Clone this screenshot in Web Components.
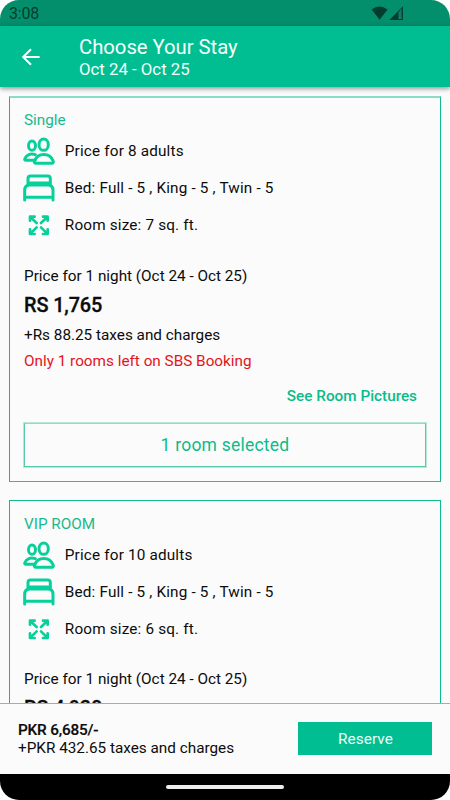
<!DOCTYPE html>
<html lang="en">
<head>
<meta charset="utf-8">
<title>Choose Your Stay</title>
<style>
html, body { margin: 0; height: 100%; background: #fff; }
body { font-family: Roboto, "Liberation Sans", sans-serif; overflow: hidden; }
</style>
</head>
<body>
<booking-screen>
  <status-bar slot="top" time="3:08"></status-bar>
  <app-header slot="top"><span>Choose Your Stay</span><span slot="dates">Oct 24 - Oct 25</span></app-header>
  <room-card class="soft" name="Single" guests="Price for 8 adults" beds="Bed: Full - 5 , King - 5 , Twin - 5" size="Room size: 7 sq. ft." stay="Price for 1 night (Oct 24 - Oct 25)" price="RS 1,765" taxes="+Rs 88.25 taxes and charges" left="Only 1 rooms left on SBS Booking"></room-card>
  <room-card name="VIP ROOM" guests="Price for 10 adults" beds="Bed: Full - 5 , King - 5 , Twin - 5" size="Room size: 6 sq. ft." stay="Price for 1 night (Oct 24 - Oct 25)" price="RS 4,920"></room-card>
  <booking-total slot="bottom"><span>PKR 6,685/-</span><span slot="taxes">+PKR 432.65 taxes and charges</span></booking-total>
  <nav-pill slot="bottom"></nav-pill>
</booking-screen>
<script>
class Base extends HTMLElement {
  connectedCallback() {
    if (!this.shadowRoot) this.attachShadow({ mode: 'open' }).innerHTML = this.render();
  }
  a(n) { return this.getAttribute(n) || ''; }
}

customElements.define('booking-screen', class extends Base {
  render() { return `<style>
    :host { display: flex; flex-direction: column; width: 450px; height: 800px; border-radius: 19px; overflow: hidden; background: #fbfbfb; color: #0c0c0c; font-size: 15.3px; }
    header { position: relative; z-index: 1; }
    main { flex: 1; min-height: 0; overflow: hidden; padding: 9px 9px 0; display: flex; flex-direction: column; gap: 18px; }
    footer { flex: none; }
    </style><header><slot name="top"></slot></header><main><slot></slot></main><footer><slot name="bottom"></slot></footer>`; }
});

customElements.define('status-bar', class extends Base {
  render() { return `<style>
    :host { display: flex; height: 26px; box-sizing: border-box; padding: 0 46px 0 9px; align-items: center; justify-content: space-between; background: #048f6c; color: #033d2f; font-size: 16px; line-height: 26px; letter-spacing: -.2px; }
    span { padding-top: 2px; }
    svg { display: block; }
    </style><span>${this.a('time')}</span>
    <svg width="33" height="16" viewBox="0 0 33 16"><path fill="#033d2f" d="M.6 4.6Q8.500-1.600 16.600 4.600L8.600 14.700Z"/><path fill="#033d2f" d="M32 1.300V15H18.300Z"/><path stroke="#048f6c" stroke-width="1.400" fill="none" d="M28.200 6.500V13.300H30.600"/><path fill="#15775d" d="M28.900 5V13.500H30.700V3.600Z"/></svg>`; }
});

customElements.define('app-header', class extends Base {
  render() { return `<style>
    :host { display: flex; height: 61px; align-items: center; background: #00be91; color: #f4fffb; box-shadow: 0 2px 4px rgba(0,0,0,.28), 0 1px 6px rgba(0,0,0,.16); }
    svg { margin-left: 20px; width: 22px; flex: none; }
    .t { margin-left: 37px; padding-top: 1px; }
    .a { font-size: 20.3px; line-height: 23px; letter-spacing: -.03px; }
    .b { font-size: 16.8px; line-height: 20px; }
    </style><svg width="22" height="22" viewBox="0 0 22 22" fill="none" stroke="#fff" stroke-width="2"><path d="M19.600 11H3.600M11 3.200 3.200 11l7.800 7.800"/></svg>
    <div class="t"><div class="a"><slot></slot></div><div class="b"><slot name="dates"></slot></div></div>`; }
});

const ICONS = {
  people: '<svg viewBox="70 136 96 96"><g stroke-width="9"><ellipse cx="97" cy="168" rx="10.500" ry="14"/><ellipse cx="132" cy="165" rx="14" ry="17"/><path d="M106 212H79Q74 212 75.500 207C80 195 93 190 107 195"/><path d="M108 221H157Q163 220 160 213C150 188 115 188 105 213Q102 220 108 221Z"/></g></svg>',
  bed: '<svg viewBox="70 247 96 96"><g stroke-width="9"><path d="M85 286V267Q85 259 93 259H144Q152 259 152 267V286M86 280H151"/><path d="M75 331V303Q75 286 90 286H145Q160 286 160 303V331M75 323H160"/></g></svg>',
  expand: '<svg viewBox="70 358 96 96"><g stroke-width="8"><path d="M91 393V381H105M130 381H144V393M144 419V433H130M105 433H91V419M92 382 111 400M143 382 124 400M143 432 124 413M92 432 111 413"/></g></svg>'
};

customElements.define('room-feature', class extends Base {
  render() { return `<style>
    :host { display: flex; height: 37px; align-items: center; gap: 9.800px; margin-left: -1px; letter-spacing: .17px; }
    svg { display: block; width: 32px; height: 32px; fill: none; stroke: #08d09b; stroke-linecap: round; stroke-linejoin: round; }
    </style>${ICONS[this.a('icon')]}<span><slot></slot></span>`; }
});

customElements.define('outline-button', class extends Base {
  render() { return `<style>
    :host { display: flex; height: 44px; box-sizing: border-box; align-items: center; justify-content: center; border: 1px solid #55cbaa; border-top-color: #8edcc5; box-shadow: 0 0 0 1px #b5e8d9, 0 -1px 0 0 #8edcc5; color: #0cbb8c; font-size: 17.500px; letter-spacing: .22px; }
    </style><slot></slot>`; }
});

customElements.define('room-card', class extends Base {
  render() { return `<style>
    :host { display: block; flex: none; box-sizing: border-box; height: 382px; border: 1px solid #10ba8c; padding: 13px 14px 0; line-height: 20px; }
    :host(.soft) { height: 386px; border-top: 2px solid #8adcc6; border-bottom: 1px solid #2abf98; padding-top: 12px; }
    .name { color: #18b98d; }
    .features { padding: 2px 0 22px; }
    :host(.soft) .features { padding-bottom: 23px; }
    .price { font-size: 19.900px; line-height: 24px; font-weight: 500; -webkit-text-stroke: .3px; letter-spacing: -.12px; margin: 8px 0 7px; }
    .left { color: #e4141b; margin-top: 6px; }
    .pics { color: #0cbb8c; font-weight: 500; text-align: right; margin: 15px 9px 17px 0; }
    </style>
    <div class="name">${this.a('name')}</div>
    <div class="features">
      <room-feature icon="people">${this.a('guests')}</room-feature>
      <room-feature icon="bed">${this.a('beds')}</room-feature>
      <room-feature icon="expand">${this.a('size')}</room-feature>
    </div>
    <div>${this.a('stay')}</div>
    <div class="price">${this.a('price')}</div>
    ${this.a('taxes') && `<div>${this.a('taxes')}</div><div class="left">${this.a('left')}</div>
    <div class="pics">See Room Pictures</div><outline-button>1 room selected</outline-button>`}`; }
});

customElements.define('booking-total', class extends Base {
  render() { return `<style>
    :host { display: flex; height: 71px; box-sizing: border-box; border-top: 1px solid #aaa; background: #fbfbfb; align-items: center; justify-content: space-between; padding: 0 18px; }
    .sum { line-height: 17.500px; padding-top: 1px; }
    .b { font-weight: 500; -webkit-text-stroke: .2px; letter-spacing: -.17px; }
    button { width: 134px; height: 33px; border: 0; margin-bottom: 2px; padding: 2px 0 0 1px; background: #00be91; color: #eefff9; font: 15.300px Roboto, sans-serif; letter-spacing: .1px; }
    </style><div class="sum"><div class="b"><slot></slot></div><div><slot name="taxes"></slot></div></div><button>Reserve</button>`; }
});

customElements.define('nav-pill', class extends Base {
  render() { return `<style>
    :host { display: flex; height: 26px; background: #000; align-items: center; justify-content: center; }
    i { width: 118px; height: 4px; border-radius: 2px; background: #eee; }
    </style><i></i>`; }
});
</script>
</body>
</html>
